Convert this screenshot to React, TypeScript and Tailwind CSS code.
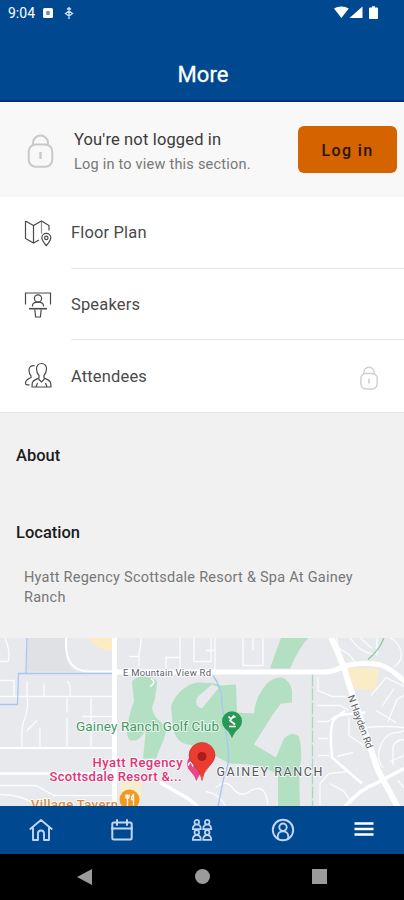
import React from 'react';

type IconProps = { className?: string };

const LockIcon: React.FC<IconProps> = ({ className }) => (
  <svg viewBox="0 0 26 34" fill="none" stroke="currentColor" strokeWidth="2" className={className}>
    <path d="M5.500 11.500V9a7.500 7.500 0 0 1 15 0v2.500" />
    <rect x="1.200" y="10.500" width="23.600" height="22.300" rx="7" />
    <path d="M13 18v7" strokeWidth="2.400" />
  </svg>
);

const FloorPlanIcon = () => (
  <svg viewBox="0 0 28 28" fill="none" stroke="currentColor" strokeWidth="1.200" className="size-7">
    <path d="M1.500 2v17.500l8 4.500 5.500-3M1.500 2l8 4.500 8-4.500 7.500 4.500v5M9.500 6.500V24" />
    <path d="M17.500 2.500v12" strokeOpacity=".6" />
    <path d="M22.300 26.600c-2.500-3-4.500-5.200-4.500-7.800a4.500 4.500 0 0 1 9 0c0 2.600-2 4.800-4.500 7.800Z" />
    <circle cx="22.300" cy="18.900" r="1.700" />
  </svg>
);

const SpeakersIcon = () => (
  <svg viewBox="0 0 28 28" fill="none" stroke="currentColor" strokeWidth="1.200" className="size-7">
    <path d="M1.500 13.500V2h25v11.500" />
    <circle cx="14" cy="7.500" r="3.600" />
    <path d="M8.500 15.500v-1c0-2.200 2-3 4-3.400h3c2 .4 4 1.200 4 3.400v1" />
    <path d="M5 17.700h18" strokeWidth="1.600" />
    <path d="M10.800 18.500l.8 7.500h4.800l.8-7.500" />
  </svg>
);

const AttendeesIcon = () => (
  <svg viewBox="0 0 28 28" fill="none" stroke="currentColor" strokeWidth="1.200" className="size-7">
    <path d="M17.500 1.500c-3.300 0-5.200 2.300-5 5.500.1 2.700 1 5 2.500 6.500V16c-3 1.500-6.500 2-6.800 5.500L8 25h19l-.2-3.500c-.3-3.500-3.800-4-6.800-5.500v-2.500c1.500-1.500 2.400-3.800 2.500-6.500.2-3.200-1.700-5.500-5-5.500Z" />
    <path d="M10.500 3.700C7 3 4.800 5.300 5 8.500c.1 2.300.8 4 2 5.300v1.700c-2.500 1.200-5.200 2-5.500 5.200-.2 1.800.5 2.200 4 2.200M14.500 17l3 3 3-3M12 25l1.500-4M23 25l-1.500-4" />
  </svg>
);

const menu = [
  { label: 'Floor Plan', icon: <FloorPlanIcon />, locked: false },
  { label: 'Speakers', icon: <SpeakersIcon />, locked: false },
  { label: 'Attendees', icon: <AttendeesIcon />, locked: true },
];

const StatusBar = () => (
  <div className="flex h-[26px] items-center justify-between pl-2 pr-[26px] text-white">
    <div className="flex items-center">
      <span className="w-[35px] text-[14px] leading-none">9:04</span>
      <svg viewBox="0 0 10 10" className="size-[10px]">
        <rect width="10" height="10" rx="1.500" fill="#fff" />
        <rect x="3.300" y="3" width="3.400" height="4" fill="#6c8fc0" />
      </svg>
      <svg viewBox="0 0 10 12" fill="none" stroke="#d5e3f8" strokeWidth="1.300" className="ml-[11px] h-3 w-[10px]">
        <path d="M5 0v12M3 2.500L5 .8l2 1.700M1.500 6.500L5 4l3.500 2.500L5 9Z" />
      </svg>
    </div>
    <svg viewBox="0 0 44 14" fill="#fff" className="h-[14px] w-11">
      <path d="M0 2.500C4.300-.3 10.500-.3 14.800 2.500L7.400 12ZM28.500.5V12h-13ZM36 1.500h2V.300h3v1.200h2q1 0 1 1V12q0 1-1 1h-7q-1 0-1-1V2.500q0-1 1-1Z" />
    </svg>
  </div>
);

// The view box uses the same units as the page, with the map's top edge at 637.5
const LocationMap = () => (
  <svg
    viewBox="0 637.500 404 168"
    className="block h-[168px] w-[404px] shrink-0 bg-[#e7e9ec]"
    fontFamily="Roboto, sans-serif"
  >
    <path d="M28 637h38v20q1 8 10 14H27Z" fill="#dfe1e5" />
    <path d="M88 637h24v13q-14 1-24-13Z" fill="#fbecc3" />
    <path d="M347 667l32 1-3 22-22-2Z" fill="#fbecc8" />
    <path d="M120 778h22l-2 27h-20Z" fill="#f7edcf" />

    <g fill="#b3dfc2">
      <path d="M132 681q7-8 17-4 8 1 8 6l-2 15-3 9q1 8 7 13l8 8-3 10-8 20h-13l3-29q-5 9-10 11h-6q-4-4-3-13l4-18 3-8Z" />
      <path d="M171 706C176 692 188 682 200 682L215 683L221 685L236 684L237 712L254 713Q255 700 262 690Q269 677 282 677Q290 680 292 690V702L281 703L272 715L254 744L276 757L284 738Q292 730 299 736Q302 748 301 760L299 773L300 806H278V774C266 766 250 763 229 763Q215 754 203 752Q196 745 188 744Q176 742 173 727Z" />
      <path d="M281 637h28q-9 8-19 31h-20Z" />
    </g>
    <path d="M197 697L212 684L219 687L202 708Q194 706 197 697Z" fill="#e7e9ec" />
    <path d="M151 678q6 4-1 8" fill="none" stroke="#fff" strokeWidth="1.500" />

    <g fill="none" stroke="#fbfcfd" strokeWidth="1.300">
      <path d="M0 696h112M27 681v15q2 11-3 24-3 8-2 26M67 696v16M91 696v50M82 716h30M40 727v19M67 717v29M37 720l-10 10M44 683v13M67 681q4 1 3 15M5 637q6 16 3 24H0M0 680h14v16H0" />
      <path d="M0 785h36l18 10h60M0 794q20 0 34 9" />
      <path d="M141 637q0 10-2 16v13M139 656h-10M180 637v32M194 637v24h17V637M166 656v14M166 657h14M215 637v33M215 650h-9M243 637v28h20V637M243 665h20M253 637v13" />
      <path d="M216 787q10-9 17 1 8 10 18 2 15-8 17 15M225 805q-6-12-19-14" />
      <path d="M318 676v14l14 6h14M318 705h22l9 5M318 721h10l9-6M318 738h10M318 755h11M337 637q-1 10 7 14t11 12M350 637q10 16 27 17M377 637v17M360 637l12 11M389 637q10 4 12 14t-7 15" />
      <path d="M320 805v-22l9-10 20-2M330 783l14 8 8 12M371 695l15-18 18 9M382 706l12-18M388 721l9-22 7-4M366 727q20-2 38 0M376 710l20 12M383 767q-8-10-2-23t18-12l5-2M393 765v-19q3-7 11-7M364 745l-15-10v-18M353 752l-16 4M404 755l-14 6M398 780l6 7" />
    </g>
    <g fill="none" stroke="#fff">
      <path d="M66 637v9q1 24 22 25h26M0 747.500h112" strokeWidth="2" />
      <path d="M0 773h114M345 710l-11 9q-5 7-2 38l30 26M332 719q5-4 12-5l21-2" strokeWidth="2.500" />
      <path d="M160 782l28 16 10 8M345 806q16-18 31-23l28-15" strokeWidth="3.500" />
      <path d="M114.500 637v169" strokeWidth="5" />
      <path d="M114 671.500h210q10 0 20-6 20-5 37-1 11 4 24 17" strokeWidth="5" />
      <path d="M331 637q12 24 19 50l28 83 20 37" strokeWidth="6" />
    </g>
    <g fill="none" stroke="#a9c5f6" strokeWidth="1.300">
      <path d="M27 637l-1 35.500M112 673H18.500l-1 31H0M213 675q9 12 9 28l6 43q2 19-4 30l-6 30" />
    </g>
    <path d="M384 637q-4 12-16 22" fill="none" stroke="#87cba4" strokeWidth="1.300" />
    <path d="M312.500 674v132" stroke="#a6d9bb" strokeWidth="1.300" strokeDasharray="12 2" />

    <g stroke="#fff" strokeOpacity=".75" strokeWidth="2" strokeLinejoin="round" paintOrder="stroke">
      <text x="123" y="675" fontSize="9.500" fill="#5d6268" textLength="88">E Mountain View Rd</text>
      <text x="76" y="730" fontSize="13.500" fill="#3f9a63" textLength="143">Gainey Ranch Golf Club</text>
      <text x="92.500" y="766.500" fontSize="13" fontWeight="500" fill="#e0337a" textLength="90">Hyatt Regency</text>
      <text x="49.500" y="780" fontSize="13" fontWeight="500" fill="#e0337a" textLength="132">Scottsdale Resort &amp;...</text>
      <text x="31" y="808" fontSize="13" fontWeight="500" fill="#dc8b3d" textLength="87">Village Tavern</text>
      <text x="216.500" y="775" fontSize="12.500" fill="#55595e" textLength="106">GAINEY RANCH</text>
      <text transform="translate(347.500 696) rotate(70)" fontSize="10" fill="#5d6268" textLength="56">N Hayden Rd</text>
    </g>

    <path d="M232 738q-2-6-7-10a10 10 0 1 1 14 0q-5 4-7 10Z" fill="#279b55" />
    <path d="M228.500 716l2 2 5-2M234 715l-4 5 5 4M229 726h7" fill="none" stroke="#fff" strokeWidth="1.700" />
    <path d="M196 782q-1-6-6-11a10 10 0 1 1 14-1q-5 5-8 12Z" fill="#e8478a" stroke="#fff" strokeWidth=".8" />
    <path d="M188 765q3-7 5 1" fill="none" stroke="#fff" strokeWidth="1.500" />
    <path d="M202 780q-1-8-7-14-6-6-6-11a13 13 0 0 1 26 0q0 5-6 11-6 6-7 14Z" fill="#ea3c30" stroke="#c22d25" strokeWidth=".6" />
    <circle cx="202" cy="756" r="4.500" fill="#a51d1d" />
    <circle cx="129.500" cy="799" r="10" fill="#f29a1f" />
    <path d="M126 794v3q2 2 3 0v-3M127.500 794v12M133.500 805v-11q-2 1-2 5h2" fill="none" stroke="#fff" strokeWidth="1.300" />
  </svg>
);

const HomeIcon = () => (
  <svg viewBox="0 0 24 24" fill="none" stroke="currentColor" strokeWidth="1.900" strokeLinecap="round" strokeLinejoin="round" className="size-6">
    <path d="M1.300 11L12 2l10.700 9M4 9.500V22h5v-6.500a3 3 0 0 1 6 0V22h5V9.500" />
  </svg>
);

const CalendarIcon = () => (
  <svg viewBox="0 0 24 24" fill="none" stroke="currentColor" strokeWidth="2" strokeLinecap="round" className="size-6">
    <rect x="2.300" y="4.500" width="19.400" height="17" rx="1.500" />
    <path d="M2 10.500h20M7 2v5M17 2v5" />
  </svg>
);

const PeopleIcon = () => (
  <svg viewBox="0 0 24 24" fill="none" stroke="currentColor" strokeWidth="1.700" className="size-6">
    <circle cx="6.800" cy="4.200" r="2.300" />
    <circle cx="17.200" cy="4.200" r="2.300" />
    <path d="M2.800 11.200c0-3 1.500-4.700 4-4.700s4 1.700 4 4.700ZM13.200 11.200c0-3 1.500-4.700 4-4.700s4 1.700 4 4.700Z" />
    <circle cx="6.800" cy="14.500" r="2.300" />
    <circle cx="17.200" cy="14.500" r="2.300" />
    <path d="M2.800 21.800c0-3 1.500-4.700 4-4.700s4 1.700 4 4.700ZM13.200 21.800c0-3 1.500-4.700 4-4.700s4 1.700 4 4.700Z" />
  </svg>
);

const ProfileIcon = () => (
  <svg viewBox="0 0 24 24" fill="none" stroke="currentColor" strokeWidth="1.900" className="size-6">
    <circle cx="12" cy="12" r="10.200" />
    <circle cx="12" cy="9.200" r="3.700" />
    <path d="M6.700 20v-1.500c0-3.300 2.300-5.300 5.300-5.300s5.300 2 5.300 5.300V20" />
  </svg>
);

const App: React.FC = () => {
  return (
    <div className="flex h-[900px] w-[404px] flex-col overflow-hidden bg-[#f1f1f1] font-['Roboto',sans-serif]">
      <header className="flex h-[102px] shrink-0 flex-col border-b-2 border-[#002c86] bg-[#004990]">
        <StatusBar />
        <h1 className="mt-[33px] pl-[2px] text-center text-[22px] font-normal leading-8 tracking-[0.1px] text-white [-webkit-text-stroke:0.3px_white]">
          More
        </h1>
      </header>

      <section className="flex h-[95px] shrink-0 items-center bg-[#f8f8f8] pl-[27px] pr-[7px]">
        <LockIcon className="mt-[3px] h-[34px] w-[27px] text-[#c9c9c9]" />
        <div className="ml-5 flex-1 whitespace-nowrap pt-[5px]">
          <p className="text-[16.500px] leading-[25px] tracking-[0.150px] text-[#3b3b3b]">You're not logged in</p>
          <p className="text-[14.500px] leading-[26px] tracking-[0.220px] text-[#777]">Log in to view this section.</p>
        </div>
        <button className="h-[47px] w-[99px] rounded-[6px] bg-[#d46300] pt-[2px] text-base font-medium tracking-[1.350px] text-[#24170d]">
          Log in
        </button>
      </section>

      <nav className="flex h-[215px] shrink-0 flex-col bg-white">
        {menu.map((item) => (
          <div key={item.label} className="group flex h-[72px] items-center pl-6 text-[#4a4a4a]">
            {item.icon}
            <div className="ml-[19px] flex h-full flex-1 items-center justify-between border-b border-[#e7e7e7] pr-[26px] pt-[3px] group-last:border-0">
              <span className="text-[16.500px] tracking-[0.150px]">{item.label}</span>
              {item.locked && <LockIcon className="h-6 w-[18px] text-[#cfcfcf]" />}
            </div>
          </div>
        ))}
      </nav>

      <section className="h-[225.500px] shrink-0 border-t border-[#e4e4e4] px-4 pt-[31px]">
        <h2 className="text-[16.500px] font-medium leading-6 text-[#1c1c1c]">About</h2>
        <h2 className="mt-[53px] text-[16.500px] font-medium leading-6 text-[#1c1c1c]">Location</h2>
        <p className="mt-[23px] pl-2 text-[14.500px] leading-[19.500px] tracking-[0.250px] text-[#777]">
          Hyatt Regency Scottsdale Resort &amp; Spa At Gainey Ranch
        </p>
      </section>

      <LocationMap />

      <nav className="grid h-[48px] shrink-0 grid-cols-5 place-items-center bg-[#004990] pl-px text-[#c0d6f5]">
        <HomeIcon />
        <CalendarIcon />
        <PeopleIcon />
        <ProfileIcon />
        <svg viewBox="0 0 20 14" stroke="#fff" strokeWidth="2.600" className="mb-[2px] h-[14px] w-5">
          <path d="M.5 1.500h19M.5 7h19M.5 12.500h19" />
        </svg>
      </nav>

      <div className="flex flex-1 items-center justify-between bg-black px-[77px] text-[#9b9b9b]">
        <svg viewBox="0 0 16 16" className="size-4" fill="currentColor">
          <path d="M15 0v16L0 8Z" />
        </svg>
        <div className="size-[15px] rounded-full bg-[#9b9b9b]" />
        <div className="size-[15px] bg-[#9b9b9b]" />
      </div>
    </div>
  );
};

export default App;
